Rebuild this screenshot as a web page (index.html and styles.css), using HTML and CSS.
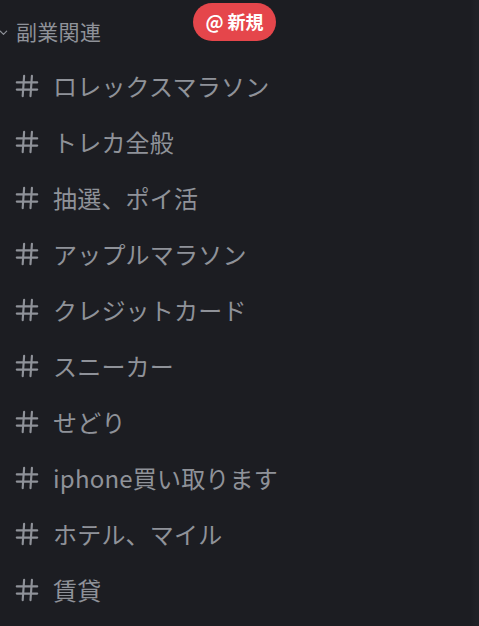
FILE: index.html
```html
<!DOCTYPE html>
<html lang="ja">
<head>
<meta charset="utf-8">
<link rel="stylesheet" href="styles.css">
</head>
<body>
<div class="sidebar">
  <div class="category">
    <svg class="chevron" viewBox="0 0 10 10" width="9" height="9"><path d="M1.5 3.5 L5 7 L8.5 3.5" fill="none" stroke="#8f9299" stroke-width="1.3" stroke-linecap="round" stroke-linejoin="round"/></svg>
    <span class="cat-name">副業関連</span>
  </div>
  <div class="badge">@ 新規</div>
  <ul class="channels">
    <li class="channel"><svg class="hash" viewBox="0 0 20 20"><path d="M7.6 1.5 L6.4 18.5 M14.1 1.5 L12.9 18.5 M1.5 7 H18.5 M1.5 13 H18.5"/></svg><span>ロレックスマラソン</span></li>
    <li class="channel"><svg class="hash" viewBox="0 0 20 20"><path d="M7.6 1.5 L6.4 18.5 M14.1 1.5 L12.9 18.5 M1.5 7 H18.5 M1.5 13 H18.5"/></svg><span>トレカ全般</span></li>
    <li class="channel"><svg class="hash" viewBox="0 0 20 20"><path d="M7.6 1.5 L6.4 18.5 M14.1 1.5 L12.9 18.5 M1.5 7 H18.5 M1.5 13 H18.5"/></svg><span>抽選、ポイ活</span></li>
    <li class="channel"><svg class="hash" viewBox="0 0 20 20"><path d="M7.6 1.5 L6.4 18.5 M14.1 1.5 L12.9 18.5 M1.5 7 H18.5 M1.5 13 H18.5"/></svg><span>アップルマラソン</span></li>
    <li class="channel"><svg class="hash" viewBox="0 0 20 20"><path d="M7.6 1.5 L6.4 18.5 M14.1 1.5 L12.9 18.5 M1.5 7 H18.5 M1.5 13 H18.5"/></svg><span>クレジットカード</span></li>
    <li class="channel"><svg class="hash" viewBox="0 0 20 20"><path d="M7.6 1.5 L6.4 18.5 M14.1 1.5 L12.9 18.5 M1.5 7 H18.5 M1.5 13 H18.5"/></svg><span>スニーカー</span></li>
    <li class="channel"><svg class="hash" viewBox="0 0 20 20"><path d="M7.6 1.5 L6.4 18.5 M14.1 1.5 L12.9 18.5 M1.5 7 H18.5 M1.5 13 H18.5"/></svg><span>せどり</span></li>
    <li class="channel"><svg class="hash" viewBox="0 0 20 20"><path d="M7.6 1.5 L6.4 18.5 M14.1 1.5 L12.9 18.5 M1.5 7 H18.5 M1.5 13 H18.5"/></svg><span>iphone買い取ります</span></li>
    <li class="channel"><svg class="hash" viewBox="0 0 20 20"><path d="M7.6 1.5 L6.4 18.5 M14.1 1.5 L12.9 18.5 M1.5 7 H18.5 M1.5 13 H18.5"/></svg><span>ホテル、マイル</span></li>
    <li class="channel"><svg class="hash" viewBox="0 0 20 20"><path d="M7.6 1.5 L6.4 18.5 M14.1 1.5 L12.9 18.5 M1.5 7 H18.5 M1.5 13 H18.5"/></svg><span>賃貸</span></li>
  </ul>
</div>
</body>
</html>
```
FILE: styles.css
```css
html, body {
  margin: 0;
  padding: 0;
  background: #1c1d22;
  height: 100%;
  overflow: hidden;
}
.sidebar {
  position: relative;
  height: 626px;
  background: linear-gradient(to right, #1c1d22 0, #1c1d22 470px, #202126 476px);
  font-family: "Noto Sans CJK JP", "Noto Sans", sans-serif;
  color: #8f9299;
}
.category {
  height: 58px;
  display: flex;
  align-items: center;
  box-sizing: border-box;
  padding-top: 5px;
}
.chevron {
  margin-left: -1px;
  margin-right: 8px;
  margin-top: 2px;
}
.cat-name {
  font-size: 21px;
  line-height: 1;
  letter-spacing: 0.3px;
  font-weight: 400;
}
.badge {
  position: absolute;
  left: 193px;
  top: 3px;
  width: 83px;
  height: 38px;
  border-radius: 19px;
  background: #e5464b;
  color: #ffffff;
  font-size: 18px;
  font-weight: 700;
  display: flex;
  align-items: center;
  justify-content: center;
  box-sizing: border-box;
  padding-bottom: 2px;
}
.channels {
  list-style: none;
  margin: 0;
  padding: 0;
}
.channel {
  height: 56px;
  display: flex;
  align-items: center;
  padding-left: 15px;
  font-size: 24px;
  font-weight: 400;
  line-height: 1;
  letter-spacing: 0.2px;
}
.hash {
  width: 24px;
  height: 24px;
  margin-right: 14px;
  fill: none;
  stroke: #8f9299;
  stroke-width: 1.8;
  stroke-linecap: round;
}
```
